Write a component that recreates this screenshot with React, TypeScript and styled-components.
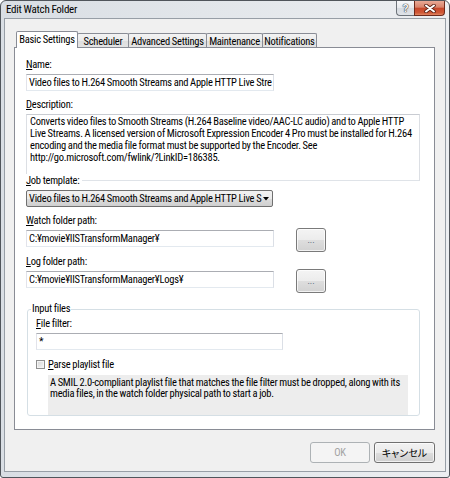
import React from "react";
import styled, { createGlobalStyle, css } from "styled-components";

const GlobalStyle = createGlobalStyle`
  html, body { margin: 0; padding: 0; background: #ffffff; }
  body {
    font-family: "Roboto Condensed", "Liberation Sans", "Noto Sans CJK JP", sans-serif;
    font-size: 10.5px;
    letter-spacing: -0.25px;
    word-spacing: -0.3px;
    color: #000;
  }
  * { box-sizing: border-box; }
`;

const Window = styled.div`
  width: 450px;
  height: 478px;
  border: 1px solid #50555b;
  border-radius: 6px 6px 3px 3px;
  background: linear-gradient(90deg, #d9dee4 0%, #e2e6ea 45%, #eceef1 100%);
  padding: 0 3px 5px 3px;
  display: flex;
  flex-direction: column;
  overflow: hidden;
`;

const TitleBar = styled.div`
  height: 17px;
  display: flex;
  justify-content: space-between;
  align-items: flex-start;
`;

const Title = styled.div`
  line-height: 17px;
  padding-left: 2px;
  white-space: nowrap;
  font-size: 11px;
`;

const Caption = styled.div`
  display: flex;
  margin-right: 1px;
`;

const HelpButton = styled.div`
  width: 18px;
  height: 15px;
  border: 1px solid #6d737a;
  border-top: none;
  border-right: none;
  border-radius: 0 0 0 4px;
  background: linear-gradient(#f7f8fa 0%, #e6e9ed 50%, #d5dae0 51%, #dfe3e8 100%);
  display: flex;
  align-items: center;
  justify-content: center;
  font-family: "Liberation Sans", sans-serif;
  font-size: 10px;
  font-weight: bold;
  color: #ffffff;
  text-shadow: 0 0 1px #3a3f46, 0 0 1px #3a3f46, 0 0 1px #3a3f46;
`;

const CloseButton = styled.div`
  width: 31px;
  height: 15px;
  border: 1px solid #6e2a1c;
  border-top: none;
  border-radius: 0 0 4px 0;
  background: linear-gradient(#e9a996 0%, #d8836b 45%, #c5462a 50%, #d15a38 85%, #e08a68 100%);
  display: flex;
  align-items: center;
  justify-content: center;
`;

const Client = styled.div`
  flex: 1;
  display: flex;
  flex-direction: column;
  border: 1px solid #979ea6;
  background: #f0f0f0;
  padding: 12px 10px 8px 9px;
`;

const TabStrip = styled.div`
  display: flex;
  align-items: flex-end;
  height: 16px;
  padding-left: 2px;
  position: relative;
  z-index: 1;
`;

const Tab = styled.div<{ $active?: boolean; $w: number }>`
  width: ${(p) => p.$w}px;
  margin-left: -1px;
  &:first-child { margin-left: 0; }
  border: 1px solid #898c95;
  border-bottom: none;
  border-radius: 2px 2px 0 0;
  display: flex;
  align-items: center;
  justify-content: center;
  white-space: nowrap;
  ${(p) =>
    p.$active
      ? css`
          height: 17px;
          margin-bottom: -1px;
          background: #ffffff;
          position: relative;
          z-index: 2;
          padding-bottom: 1px;
        `
      : css`
          height: 14px;
          background: linear-gradient(#f3f3f3 0%, #ebebeb 50%, #dddddd 51%, #e4e4e4 100%);
          padding-top: 1px;
        `}
`;

const Pane = styled.div`
  height: 383px;
  border: 1px solid #898c95;
  background: #ffffff;
  padding: 10px 14px 0 11px;
  display: flex;
  flex-direction: column;
  align-items: flex-start;
`;

const Label = styled.div<{ $mt?: number; $overlay?: boolean }>`
  height: 14px;
  line-height: 14px;
  white-space: nowrap;
  margin-top: ${(p) => p.$mt ?? 0}px;
  margin-bottom: 2px;
  ${(p) =>
    p.$overlay &&
    css`
      background: #ffffff;
      padding-right: 3px;
      position: relative;
    `}
`;

const Key = styled.span`
  text-decoration: underline;
  text-underline-offset: 1px;
`;

const TextBox = styled.div<{ $w: number }>`
  width: ${(p) => p.$w}px;
  height: 17px;
  border: 1px solid;
  border-color: #abadb3 #dbdfe6 #e3e9ef #e2e3ea;
  background: #ffffff;
  padding: 0 2px;
  line-height: 15px;
  white-space: nowrap;
  overflow: hidden;
`;

const TextArea = styled.div`
  width: 394px;
  height: 67px;
  border: 1px solid;
  border-color: #c9ccd2 #dcdfe4 #dfe3e8 #dcdfe4;
  background: #ffffff;
  padding: 1px 3px;
  line-height: 12px;
`;

const Line = styled.div`
  white-space: nowrap;
`;

const Combo = styled.div`
  width: 247px;
  height: 17px;
  border: 1px solid #707070;
  border-radius: 2px;
  background: linear-gradient(#f2f2f2 0%, #ebebeb 50%, #dddddd 51%, #cfcfcf 100%);
  display: flex;
  align-items: center;
  justify-content: space-between;
  padding: 0 3px 0 2px;
  white-space: nowrap;
`;

const PathRow = styled.div`
  display: flex;
  align-items: flex-start;
  gap: 22px;
`;

const BrowseButton = styled.div`
  width: 30px;
  height: 24px;
  margin-top: -2px;
  border: 1px solid #7a7a7a;
  border-radius: 3px;
  background: linear-gradient(#f4f4f4 0%, #ececec 50%, #dedede 51%, #d2d2d2 100%);
  box-shadow: inset 0 0 0 1px rgba(255, 255, 255, 0.7);
  display: flex;
  align-items: center;
  justify-content: center;
  color: #3b5470;
  font-size: 9px;
  letter-spacing: 0;
  padding-bottom: 1px;
`;

const Group = styled.fieldset`
  margin: 9px 0 0 1px;
  padding: 0;
  width: 393px;
  min-width: 0;
  border: 1px solid #d5dfe5;
  border-radius: 3px;
  font: inherit;
`;

const Legend = styled.legend`
  margin-left: 3px;
  padding: 0 1px;
  height: 14px;
  line-height: 14px;
  font: inherit;
`;

const GroupBody = styled.div`
  padding: 0 8px;
  display: flex;
  flex-direction: column;
  align-items: flex-start;
`;

const CheckRow = styled.div`
  margin-top: 7px;
  height: 14px;
  display: flex;
  align-items: center;
  gap: 3px;
  white-space: nowrap;
`;

const CheckBox = styled.div`
  width: 9px;
  height: 9px;
  border: 1px solid #8f8f8f;
  background: linear-gradient(135deg, #d6d6d6 0%, #f6f6f6 100%);
  box-shadow: inset 0 0 0 1px #f4f4f4;
`;

const Hint = styled.div`
  margin: 4px 0 0 12px;
  width: 360px;
  height: 40px;
  background: #ededed;
  padding: 1.5px 2px 0 2px;
  line-height: 11.5px;
`;

const Footer = styled.div`
  margin-top: 12px;
  height: 21px;
  display: flex;
  justify-content: flex-end;
  gap: 4px;
`;

const DialogButton = styled.div<{ $w: number; $disabled?: boolean }>`
  width: ${(p) => p.$w}px;
  height: 21px;
  border-radius: 3px;
  display: flex;
  align-items: center;
  justify-content: center;
  white-space: nowrap;
  ${(p) =>
    p.$disabled
      ? css`
          border: 1px solid #adb2b5;
          background: #f4f4f4;
          color: #a3a3a3;
        `
      : css`
          border: 1px solid #707070;
          background: linear-gradient(#f2f2f2 0%, #ebebeb 50%, #dddddd 51%, #cfcfcf 100%);
          box-shadow: inset 0 0 0 1px rgba(255, 255, 255, 0.7);
          color: #000;
        `}
`;

const Kana = styled.span`
  font-family: "Noto Sans CJK JP", sans-serif;
  font-size: 10px;
  letter-spacing: 0;
  font-feature-settings: "palt";
`;

const tabs = [
  { label: "Basic Settings", w: 62, active: true },
  { label: "Scheduler", w: 52 },
  { label: "Advanced Settings", w: 79 },
  { label: "Maintenance", w: 57 },
  { label: "Notifications", w: 55 },
];

const descLines = [
  "Converts video files to Smooth Streams (H.264 Baseline video/AAC-LC audio) and to Apple HTTP",
  "Live Streams. A licensed version of Microsoft Expression Encoder 4 Pro must be installed for H.264",
  "encoding and the media file format must be supported by the Encoder. See",
  "http://go.microsoft.com/fwlink/?LinkID=186385.",
];

const hintLines = [
  "A SMIL 2.0-compliant playlist file that matches the file filter must be dropped, along with its",
  "media files, in the watch folder physical path to start a job.",
];

const CloseGlyph = () => (
  <svg width="12" height="9" viewBox="0 0 12 9">
    <path d="M2 1.5 L10 7.5 M10 1.5 L2 7.5" stroke="#5a2216" strokeWidth="3.6" strokeLinecap="round" />
    <path d="M2 1.5 L10 7.5 M10 1.5 L2 7.5" stroke="#ffffff" strokeWidth="2" strokeLinecap="round" />
  </svg>
);

const Arrow = () => (
  <svg width="6" height="4" viewBox="0 0 6 4">
    <path d="M0 0 H6 L3 3.5 Z" fill="#000" />
  </svg>
);

export default function App() {
  return (
    <>
      <GlobalStyle />
      <Window>
        <TitleBar>
          <Title>Edit Watch Folder</Title>
          <Caption>
            <HelpButton>?</HelpButton>
            <CloseButton>
              <CloseGlyph />
            </CloseButton>
          </Caption>
        </TitleBar>
        <Client>
          <TabStrip>
            {tabs.map((t) => (
              <Tab key={t.label} $w={t.w} $active={t.active}>
                {t.label}
              </Tab>
            ))}
          </TabStrip>
          <Pane>
            <Label>
              <Key>N</Key>ame:
            </Label>
            <TextBox $w={248}>Video files to H.264 Smooth Streams and Apple HTTP Live Stre</TextBox>

            <Label $mt={7}>
              <Key>D</Key>escription:
            </Label>
            <TextArea>
              {descLines.map((l) => (
                <Line key={l}>{l}</Line>
              ))}
            </TextArea>

            <Label $mt={-7} $overlay>
              <Key>J</Key>ob template:
            </Label>
            <Combo>
              <span>Video files to H.264 Smooth Streams and Apple HTTP Live S</span>
              <Arrow />
            </Combo>

            <Label $mt={7}>
              <Key>W</Key>atch folder path:
            </Label>
            <PathRow>
              <TextBox $w={248}>C:¥movie¥IISTransformManager¥</TextBox>
              <BrowseButton>...</BrowseButton>
            </PathRow>

            <Label $mt={3}>
              <Key>L</Key>og folder path:
            </Label>
            <PathRow>
              <TextBox $w={248}>C:¥movie¥IISTransformManager¥Logs¥</TextBox>
              <BrowseButton>...</BrowseButton>
            </PathRow>

            <Group>
              <Legend>Input files</Legend>
              <GroupBody>
                <Label $mt={1}>
                  <Key>F</Key>ile filter:
                </Label>
                <TextBox $w={247}>*</TextBox>
                <CheckRow>
                  <CheckBox />
                  <span>
                    <Key>P</Key>arse playlist file
                  </span>
                </CheckRow>
                <Hint>
                  {hintLines.map((l) => (
                    <Line key={l}>{l}</Line>
                  ))}
                </Hint>
              </GroupBody>
            </Group>
          </Pane>
          <Footer>
            <DialogButton $w={60} $disabled>
              OK
            </DialogButton>
            <DialogButton $w={61}>
              <Kana>キャンセル</Kana>
            </DialogButton>
          </Footer>
        </Client>
      </Window>
    </>
  );
}
